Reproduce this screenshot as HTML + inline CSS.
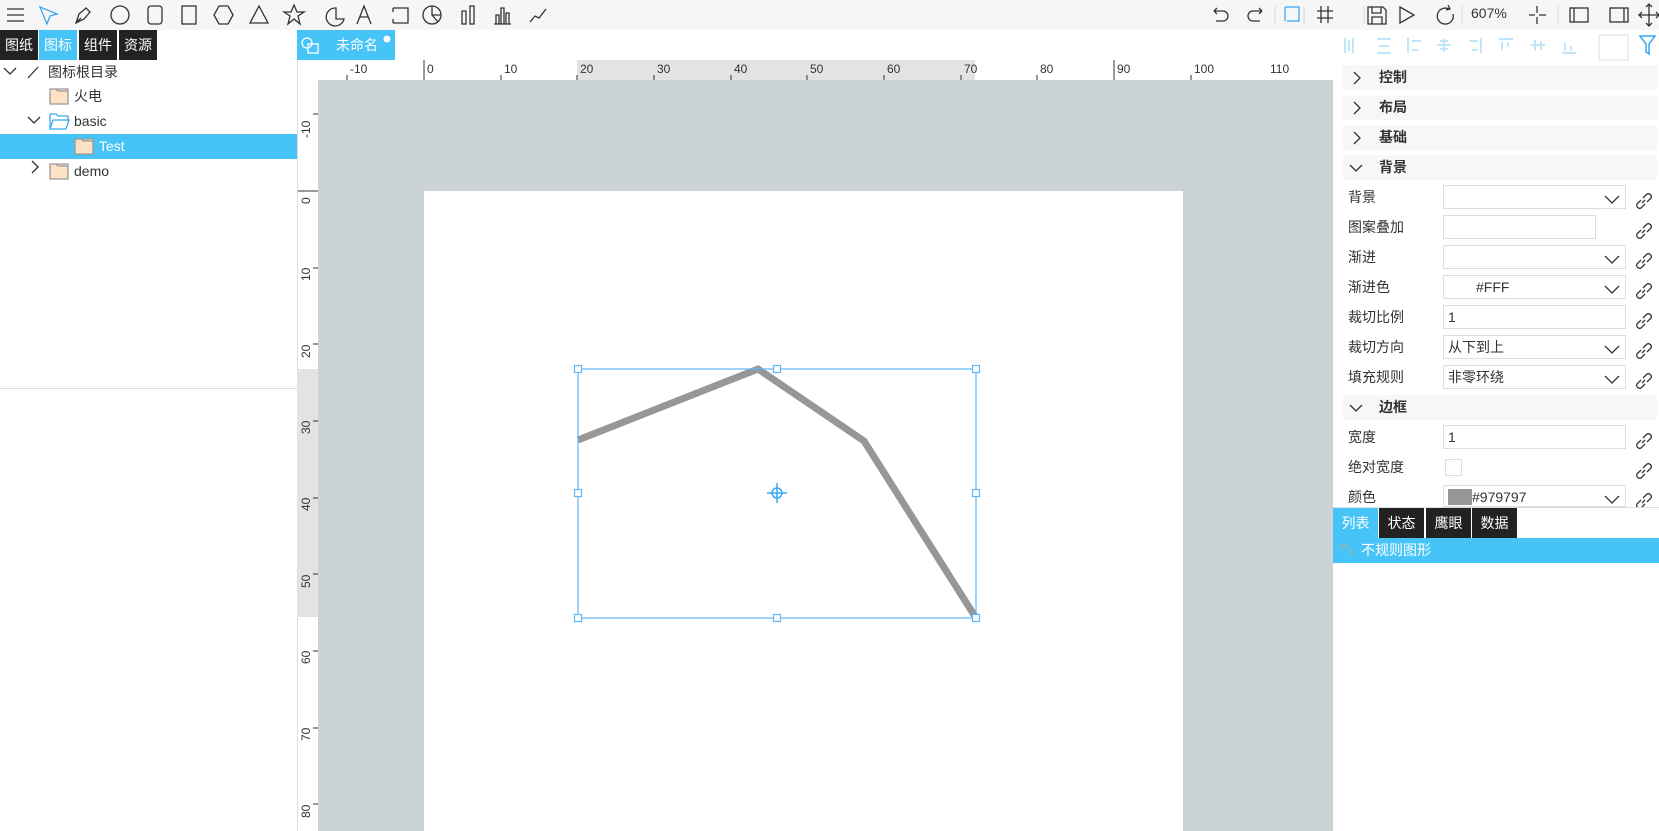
<!DOCTYPE html>
<html><head><meta charset="utf-8"><style>
*{box-sizing:border-box;margin:0;padding:0}
body{width:1659px;height:831px;overflow:hidden;background:#fff;font-family:"Liberation Sans","Noto Sans CJK SC",sans-serif;font-size:14px;color:#333;position:relative}
.abs{position:absolute}
#tb{left:0;top:0;width:1659px;height:30px;background:#f6f6f6}
.tab{position:absolute;top:30px;height:30px;line-height:30px;color:#fff;background:#222;text-align:center;font-size:14px}
.tr{position:absolute;left:0;width:297px;height:25px;line-height:25px}
.sec{position:absolute;left:1343px;width:314px;height:25px;background:#f7f7f7;font-weight:bold;line-height:25px}
.lbl{position:absolute;left:1348px;height:25px;line-height:25px;font-size:14px}
.inp{position:absolute;left:1443px;width:183px;height:24px;border:1px solid #ddd;background:#fff;line-height:22px;padding-left:4px}
</style></head><body>
<div id="tb" class="abs"></div>
<svg class="abs" style="left:0;top:0" width="1659" height="30" fill="none" stroke="#333" stroke-width="1.3">
<path d="M7 9h17M7 15h17M7 21h17"/>
<path d="M40 7l17 7-7 2-3 8z" stroke="#3aa8f0"/>
<path d="M76 23l3-9 7-6 4 4-6 7zM76 23l5-5" />
<circle cx="120" cy="15" r="9"/>
<rect x="148" y="6" width="14" height="18" rx="3"/>
<rect x="182" y="6" width="14" height="18"/>
<path d="M219 6h9l5 9-5 9h-9l-5-9z"/>
<path d="M259 6l9 17h-18z"/>
<path d="M294 5l3 7h7l-6 4 2 8-6-5-6 5 2-8-6-4h7z"/>
<path d="M336 8a9 9 0 1 0 8 11h-8z"/>
<path d="M357 24l7-18 7 18M360 17h8"/>
<path d="M393 8h15v15h-15M393 8v4M393 19v4"/>
<circle cx="432" cy="15" r="9"/><path d="M432 6v9h9M432 15l6 7"/>
<path d="M462 11h4v13h-4zM470 6h4v18h-4z"/>
<path d="M496 15h3v9h-3zM501 8h3v16h-3zM506 13h3v11h-3zM494 24h17"/>
<path d="M530 22l5-6 4 2 7-9"/>
<path d="M1214 11h9a5 5 0 0 1 0 10h-7M1214 11l3-3M1214 11l3 3"/>
<path d="M1262 11h-9a5 5 0 0 0 0 10h7M1262 11l-3-3M1262 11l-3 3"/>
<path d="M1275 6v18M1304 6v18M1364 6v18M1462 6v18M1558 6v18" stroke="#ddd"/>
<path d="M1285 7h14v14h-12M1285 7v14" stroke="#3aa8f0"/>
<path d="M1317 11h16M1317 18h16M1321 6v17M1328 6v17"/>
<path d="M1362 7h15l3 3v14h-18zM1366 7v6h9V7M1366 24v-7h10v7" transform="translate(6,0)"/>
<path d="M1400 7l14 8-14 8z"/>
<path d="M1449 9a8 8 0 1 0 4 5M1448 5l2 4-4 1"/>
<path d="M1537 6v7M1537 17v7M1529 15h6M1539 15h7"/>
<rect x="1570" y="8" width="18" height="14"/><path d="M1574 8v14"/>
<rect x="1610" y="8" width="18" height="14"/><path d="M1624 8v14"/>
<path d="M1649 4v22M1639 15h20M1646 7l3-3 3 3M1646 23l3 3 3-3M1642 12l-3 3 3 3M1656 12l3 3-3 3"/>
</svg>
<div class="abs" style="left:1471px;top:5px;font-size:14px">607%</div>

<div class="tab" style="left:0;width:38px">图纸</div>
<div class="tab" style="left:39px;width:38px;background:#47c4f7">图标</div>
<div class="tab" style="left:79px;width:38px">组件</div>
<div class="tab" style="left:119px;width:38px">资源</div>
<div class="abs" style="left:297px;top:30px;width:1px;height:801px;background:#ddd"></div>
<div class="abs" style="left:0;top:388px;width:297px;height:1px;background:#ddd"></div>

<div class="tr" style="top:60px"><span style="position:absolute;left:48px">图标根目录</span></div>
<div class="tr" style="top:84px"><span style="position:absolute;left:74px">火电</span></div>
<div class="tr" style="top:109px"><span style="position:absolute;left:74px">basic</span></div>
<div class="tr" style="top:134px;background:#47c4f7;color:#fff"><span style="position:absolute;left:99px">Test</span></div>
<div class="tr" style="top:159px"><span style="position:absolute;left:74px">demo</span></div>
<svg class="abs" style="left:0;top:60px" width="297" height="125" fill="none" stroke="#333" stroke-width="1.3">
<path d="M4 8l6 6 6-6M28 18l10-11"/>
<path d="M50 29h18v15h-18zM50 29h6l2 2h10" fill="#fde2c4" stroke="#999"/>
<path d="M28 57l6 6 6-6"/>
<path d="M50 54h6l2 2h10v5M50 54v15h16l3-9h-16l-3 9" stroke="#3aa8f0"/>
<path d="M75 79h18v15h-18zM75 79h6l2 2h10" fill="#fde2c4" stroke="#999"/>
<path d="M32 101l6 6-6 6"/>
<path d="M50 104h18v15h-18zM50 104h6l2 2h10" fill="#fde2c4" stroke="#999"/>
</svg>

<div class="abs" style="left:297px;top:30px;width:98px;height:30px;background:#47c4f7;color:#fff;line-height:30px;padding-left:39px">未命名</div>
<svg class="abs" style="left:297px;top:30px" width="98" height="30" fill="none" stroke="#fff" stroke-width="1.3"><circle cx="10" cy="13" r="5"/><rect x="11" y="14" width="10" height="9"/><circle cx="90" cy="9" r="3.5" fill="#fff" stroke="none"/></svg>

<div class="abs" style="left:318px;top:80px;width:1015px;height:751px;background:#cbd3d7"></div>
<div class="abs" style="left:577px;top:60px;width:398px;height:20px;background:#e3e3e3"></div>
<div class="abs" style="left:297px;top:369px;width:21px;height:248px;background:#e3e3e3"></div>
<div class="abs" style="left:424px;top:191px;width:759px;height:640px;background:#fff"></div>
<svg class="abs" style="left:297px;top:60px" width="1036" height="771" font-family="Liberation Sans" font-size="12" fill="#333">
<g stroke="#333">
<path d="M50 20v-5M127 20v-20M204 20v-5M280 20v-5M357 20v-5M434 20v-5M510 20v-5M587 20v-5M664 20v-5M740 20v-5M817 20v-20M894 20v-5"/>
<path d="M21 54h-5M21 131h-20M21 208h-5M21 284h-5M21 361h-5M21 438h-5M21 514h-5M21 591h-5M21 668h-5M21 744h-5"/>
</g>
<text x="53" y="13">-10</text><text x="130" y="13">0</text><text x="207" y="13">10</text><text x="283" y="13">20</text><text x="360" y="13">30</text><text x="437" y="13">40</text><text x="513" y="13">50</text><text x="590" y="13">60</text><text x="667" y="13">70</text><text x="743" y="13">80</text><text x="820" y="13">90</text><text x="897" y="13">100</text><text x="973" y="13">110</text>
<g transform="rotate(-90)">
<text x="-78" y="13">-10</text><text x="-144" y="13">0</text><text x="-221" y="13">10</text><text x="-298" y="13">20</text><text x="-374" y="13">30</text><text x="-451" y="13">40</text><text x="-528" y="13">50</text><text x="-604" y="13">60</text><text x="-681" y="13">70</text><text x="-758" y="13">80</text>
</g>
</svg>

<svg class="abs" style="left:0;top:0" width="1333" height="831" fill="none">
<polyline points="578,440 758,369 864,441 976,618" stroke="#979797" stroke-width="7" stroke-linejoin="miter"/>
<rect x="578" y="369" width="398" height="249" stroke="#62b6f7" stroke-width="1.2"/>
<g fill="#fff" stroke="#62b6f7" stroke-width="1.2">
<rect x="574.5" y="365.5" width="7" height="7"/><rect x="773.5" y="365.5" width="7" height="7"/><rect x="972.5" y="365.5" width="7" height="7"/>
<rect x="574.5" y="489.5" width="7" height="7"/><rect x="972.5" y="489.5" width="7" height="7"/>
<rect x="574.5" y="614.5" width="7" height="7"/><rect x="773.5" y="614.5" width="7" height="7"/><rect x="972.5" y="614.5" width="7" height="7"/>
</g>
<circle cx="777" cy="493" r="5" stroke="#3aa8f0" stroke-width="1.5"/><path d="M767 493h20M777 483v20" stroke="#3aa8f0" stroke-width="1.5"/>
</svg>

<svg class="abs" style="left:1333px;top:30px" width="326" height="35" fill="none" stroke="#bfe6fb" stroke-width="2">
<path d="M12 8v15M20 8v15M16 10v11"/>
<path d="M44 9h14M44 23h14M46 16h10"/>
<path d="M75 8v15M79 11h9M79 20h6"/>
<path d="M104 15h14M107 11h8M107 19h8M111 9v13"/>
<path d="M148 8v15M136 11h9M139 20h6"/>
<path d="M166 9h14M169 12v8M175 12v5"/>
<path d="M198 15h14M202 10v11M208 11v9"/>
<path d="M229 23h14M232 13v8M238 16v5"/>
<rect x="266" y="5" width="29" height="25" stroke="#ddd" stroke-width="1"/>
<path d="M307 6h15l-6 8v10l-3-2v-8z" stroke="#3aa8f0" stroke-width="1.5"/>
</svg>
<div class="sec" style="top:65px"><span style="position:absolute;left:36px">控制</span></div>
<div class="sec" style="top:95px"><span style="position:absolute;left:36px">布局</span></div>
<div class="sec" style="top:125px"><span style="position:absolute;left:36px">基础</span></div>
<div class="sec" style="top:155px"><span style="position:absolute;left:36px">背景</span></div>
<div class="sec" style="top:395px"><span style="position:absolute;left:36px">边框</span></div>
<svg class="abs" style="left:1343px;top:65px" width="30" height="360" fill="none" stroke="#333" stroke-width="1.3">
<path d="M11 7l6 6-6 6M11 37l6 6-6 6M11 67l6 6-6 6M7 100l6 6 6-6M7 340l6 6 6-6"/>
</svg>
<div class="lbl" style="top:185px">背景</div>
<div class="lbl" style="top:215px">图案叠加</div>
<div class="lbl" style="top:245px">渐进</div>
<div class="lbl" style="top:275px">渐进色</div>
<div class="lbl" style="top:305px">裁切比例</div>
<div class="lbl" style="top:335px">裁切方向</div>
<div class="lbl" style="top:365px">填充规则</div>
<div class="lbl" style="top:425px">宽度</div>
<div class="lbl" style="top:455px">绝对宽度</div>
<div class="lbl" style="top:485px">颜色</div>
<div class="inp" style="top:185px"></div>
<div class="inp" style="top:215px;width:153px"></div>
<div class="inp" style="top:245px"></div>
<div class="inp" style="top:275px;padding-left:32px">#FFF</div>
<div class="inp" style="top:305px">1</div>
<div class="inp" style="top:335px">从下到上</div>
<div class="inp" style="top:365px">非零环绕</div>
<div class="inp" style="top:425px">1</div>
<div class="abs" style="left:1445px;top:459px;width:17px;height:17px;border:1px solid #ddd"></div>
<div class="inp" style="top:485px;padding-left:28px;height:22px">#979797<div class="abs" style="left:4px;top:3px;width:24px;height:16px;background:#979797"></div></div>
<svg class="abs" style="left:1443px;top:185px" width="216" height="325" fill="none" stroke="#333" stroke-width="1.3">
<path d="M162 11l7 7 7-7M162 71l7 7 7-7M162 101l7 7 7-7M162 161l7 7 7-7M162 191l7 7 7-7M162 311l7 7 7-7"/>
<g id="l"><path d="M200 13l4-4a3 3 0 0 1 4 4l-4 4M198 15l-4 4a3 3 0 0 0 4 4l4-4M199 18l3-3"/></g>
<use href="#l" y="30"/><use href="#l" y="60"/><use href="#l" y="90"/><use href="#l" y="120"/><use href="#l" y="150"/><use href="#l" y="180"/><use href="#l" y="240"/><use href="#l" y="270"/><use href="#l" y="300"/>
</svg>
<div class="abs" style="left:1333px;top:507px;width:326px;height:1px;background:#ddd"></div>
<div class="abs" style="left:1333px;top:508px;width:326px;height:323px;background:#fff"></div>
<div class="tab" style="left:1333px;top:508px;width:45px;background:#47c4f7">列表</div>
<div class="tab" style="left:1379px;top:508px;width:45px">状态</div>
<div class="tab" style="left:1426px;top:508px;width:45px">鹰眼</div>
<div class="tab" style="left:1472px;top:508px;width:45px">数据</div>
<div class="abs" style="left:1333px;top:538px;width:326px;height:25px;background:#47c4f7;color:#fff;line-height:25px;padding-left:28px">不规则图形</div>
<svg class="abs" style="left:1335px;top:540px" width="24" height="20" fill="none" stroke="#aaa" stroke-width="1.2"><path d="M3 8l6-4 4 3 4 8"/></svg>
</body></html>
